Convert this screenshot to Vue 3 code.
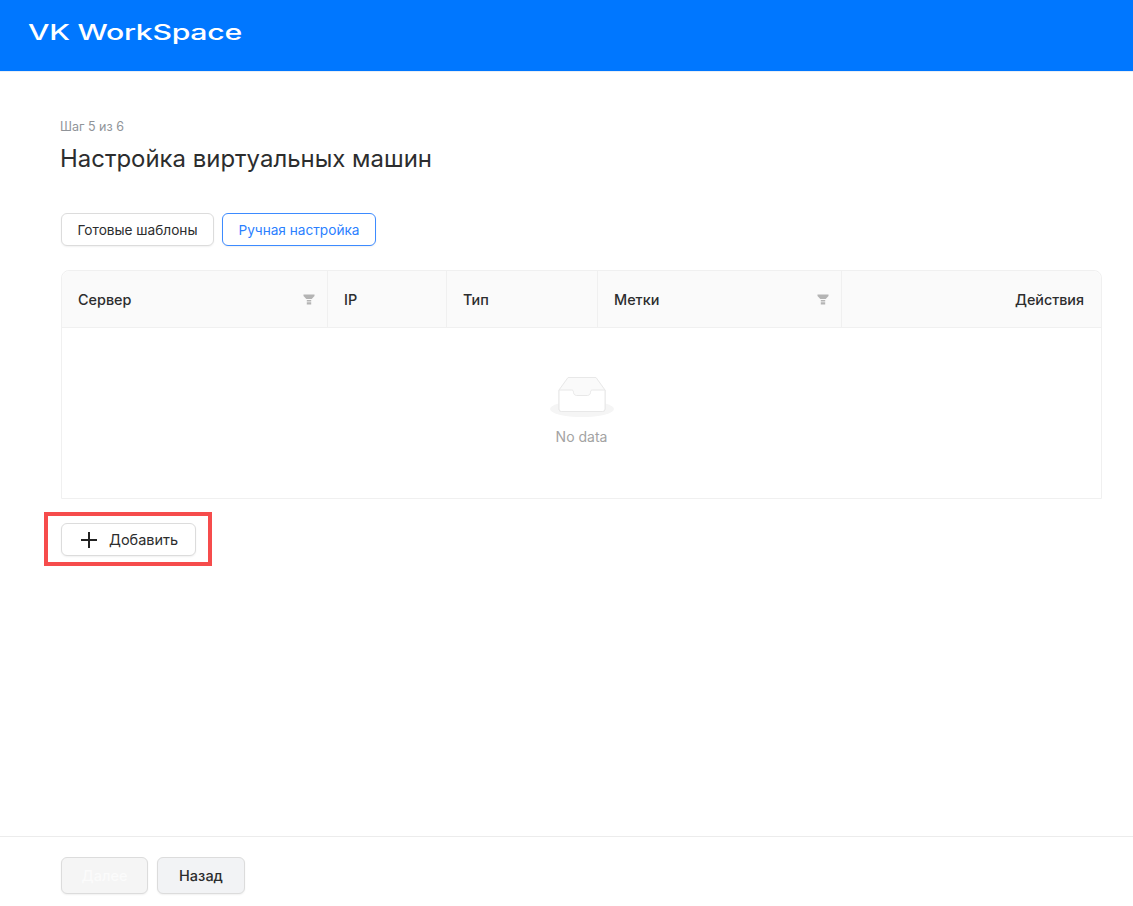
<template>
  <div class="page">
    <header class="top">
      <span class="logo">VK WorkSpace</span>
    </header>

    <main class="content">
      <div class="step">Шаг 5 из 6</div>
      <h1 class="title">Настройка виртуальных машин</h1>

      <div class="tabs">
        <button class="btn tab">Готовые шаблоны</button>
        <button class="btn tab active">Ручная настройка</button>
      </div>

      <div class="table">
        <div class="thead">
          <div v-for="c in columns" :key="c.name" class="th" :class="{ right: c.right }">
            <span>{{ c.name }}</span>
            <svg v-if="c.filter" class="filter" width="12" height="11" viewBox="0 0 12 11"><path d="M0.500 0.500h11v1.500L8.700 5H3.300L0.500 2z" fill="#b4b4b4"/><path d="M3.800 6h4.400v1.500H3.800zM3.800 8.300h4.400v2.200H3.800z" fill="#b4b4b4"/></svg>
          </div>
        </div>
        <div class="empty">
          <svg width="64" height="41" viewBox="0 0 64 41">
            <ellipse cx="32" cy="33" rx="32" ry="8" fill="#f5f5f5"/>
            <path d="M9 14L18 1.500h28L55 14v19a2.500 2.500 0 0 1-2.500 2.500h-41A2.500 2.500 0 0 1 9 33z" fill="#fafafa" stroke="#e8e8e8" stroke-width="1"/>
            <path d="M9 14h12.500c1.500 0 2 1 2 2.500s1.500 3 3 3h11c1.500 0 3-1.500 3-3s.5-2.500 2-2.500H55v19a2.500 2.500 0 0 1-2.500 2.500h-41A2.500 2.500 0 0 1 9 33z" fill="#fff" stroke="#e8e8e8" stroke-width="1"/>
          </svg>
          <div class="nodata">No data</div>
        </div>
      </div>

      <div class="add-wrap">
        <button class="btn add">
          <svg width="18" height="18" viewBox="0 0 18 18"><path d="M9 1v16M1 9h16" stroke="#222" stroke-width="2" fill="none"/></svg>
          <span>Добавить</span>
        </button>
        <div class="mark"></div>
      </div>
    </main>

    <footer class="bottom">
      <button class="btn foot disabled">Далее</button>
      <button class="btn foot back">Назад</button>
    </footer>
  </div>
</template>

<script setup>
const columns = [
  { name: 'Сервер', filter: true },
  { name: 'IP' },
  { name: 'Тип' },
  { name: 'Метки', filter: true },
  { name: 'Действия', right: true },
]
</script>

<style>
html, body { margin: 0; background: #fff; }
</style>

<style scoped>
.page { height: 906px; display: flex; flex-direction: column; font-family: Inter, "Liberation Sans", sans-serif; color: #2c2d2e; overflow: hidden; }
.top { height: 71px; background: #0077ff; border-bottom: 1px solid #e9eef5; display: flex; align-items: center; padding-left: 28px; flex-shrink: 0; }
.logo { color: #fff; font-size: 21px; font-weight: 500; transform: scaleX(1.44); transform-origin: left center; white-space: nowrap; margin-top: -7px; letter-spacing: -0.2px; }
.content { flex: 1; padding: 47px 31px 0 60px; }
.step { font-size: 12.500px; line-height: 16px; color: #909499; }
.title { margin: 8px 0 0; font-size: 23.950px; line-height: 32px; font-weight: 400; color: #2c2d2e; }
.tabs { display: flex; gap: 8px; margin-top: 38px; padding-left: 1px; }
.btn { font-family: inherit; background: #fff; border: 1px solid #dcdcdc; border-radius: 6px; color: #2c2d2e; cursor: pointer; box-shadow: 0 1px 2px rgba(0,0,0,.06); }
.tab { height: 33px; padding: 0 15.500px; font-size: 13.650px; }
.tab.active { color: #2b7fff; border-color: #3d8bff; }
.table { margin: 24px 0 0 1px; border: 1px solid #f0f0f0; border-radius: 8px 8px 0 0; }
.thead { display: grid; grid-template-columns: 266px 119px 151px 244px 1fr; height: 56px; background: #fafafa; border-bottom: 1px solid #f0f0f0; border-radius: 8px 8px 0 0; }
.th { display: flex; align-items: center; justify-content: space-between; padding: 0 12px 0 16px; font-size: 14.400px; font-weight: 500; border-right: 1px solid #f0f0f0; }
.th:last-child { border-right: 0; }
.th.right { justify-content: flex-end; padding-right: 17px; font-size: 14.300px; }
.empty { height: 170px; display: flex; flex-direction: column; align-items: center; padding-top: 48px; box-sizing: border-box; }
.nodata { margin-top: 11px; font-size: 14px; line-height: 18px; color: #a3a3a3; }
.add-wrap { position: relative; width: 135px; margin: 24px 0 0 1px; }
.add { width: 135px; height: 33px; display: flex; align-items: center; gap: 11px; padding: 0 0 0 18px; font-size: 14.500px; color: #2c2d2e; }
.mark { position: absolute; left: -17px; top: -11px; width: 168px; height: 54px; border: 4px solid #f64c4c; box-sizing: border-box; pointer-events: none; }
.bottom { height: 70px; flex-shrink: 0; border-top: 1px solid #ececec; display: flex; gap: 9px; padding: 20px 0 0 61px; box-sizing: border-box; }
.foot { width: 87px; height: 37px; font-size: 14.500px; font-weight: 500; background: #f2f3f5; }
.foot.back { width: 88px; }
.foot.disabled { background: #f5f5f5; color: #fbfbfb; }
</style>
